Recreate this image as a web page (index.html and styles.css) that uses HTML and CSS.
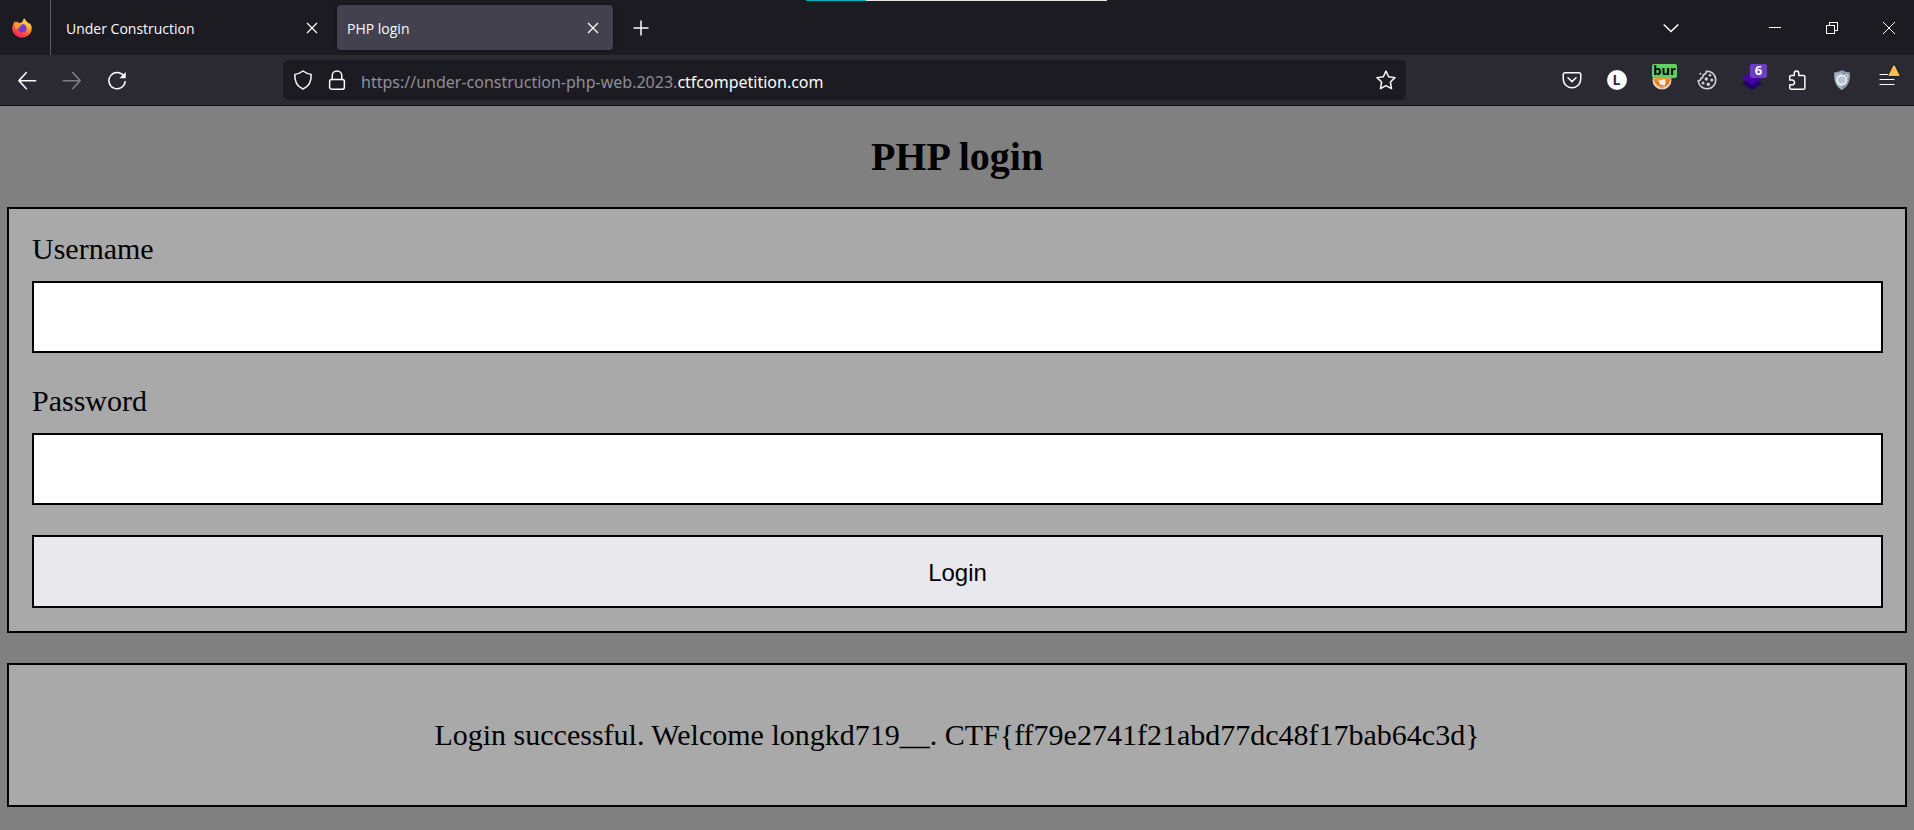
FILE: index.html
```
<!DOCTYPE html>
<html lang="en">
<head>
<meta charset="utf-8">
<title>PHP login</title>
<link rel="stylesheet" href="styles.css">
</head>
<body>
<header class="browser">
  <div class="loadbar"></div>
  <div class="tabbar">
    <div class="brand">
      <svg class="icon" viewBox="0 0 20 20" aria-label="Firefox">
        <defs>
          <linearGradient id="flame" x1="0.8" y1="0" x2="0.3" y2="1">
            <stop offset="0" stop-color="#fff44f"/><stop offset=".35" stop-color="#ffb02e"/>
            <stop offset=".65" stop-color="#ff5a36"/><stop offset="1" stop-color="#f5156c"/>
          </linearGradient>
        </defs>
        <path fill="url(#flame)" d="M1.2 6.5 2.6 3l1.2 1.600 2-1 1 1.700 3.600-1.200C10.700 2.300 11.500 1 12.600.2c.3 1.700 1.300 2.700 2.600 3.800 1 .5 1.500 1.200 1.800 2 .3-.3.4-.6.3-1.200 1.600 1.500 2.500 3.600 2.500 5.700a9.800 9.300 0 0 1-19.600 0c0-1.500.3-2.800 1-4z"/>
        <circle cx="10.300" cy="10.200" r="4.300" fill="#7139d8"/>
        <path fill="#ff9a2b" d="M2.500 5.500c2-.8 4-.6 5.300.4l2.700.2c-.1 1.200-1.500 1.500-2.200 1.800-.6.6-.3 1.200-.8 1.700-.7.5-1.500.7-1.800 1.400L3 10z"/>
        <path fill="#ffcb3a" d="M12 5.500c2.700.6 3.800 2.500 3.500 5 1.200-1.600 1.100-4-.4-5.700L12.700 2z"/>
      </svg>
    </div>
    <div class="tab">
      <span class="tab-title">Under Construction</span>
      <button class="tab-close" aria-label="Close tab"><svg viewBox="0 0 10 10"><path d="M0 0l10 10M10 0L0 10"/></svg></button>
    </div>
    <div class="tab tab-active">
      <span class="tab-title">PHP login</span>
      <button class="tab-close" aria-label="Close tab"><svg viewBox="0 0 10 10"><path d="M0 0l10 10M10 0L0 10"/></svg></button>
    </div>
    <button class="new-tab" aria-label="New tab"><svg viewBox="0 0 16 16"><path d="M8 .5v15M.5 8h15"/></svg></button>
    <div class="window-controls">
      <button class="list-tabs" aria-label="List all tabs"><svg viewBox="0 0 16 16"><path d="M.7 4.500 8 11.500l7.300-7"/></svg></button>
      <button class="win" aria-label="Minimize"><svg viewBox="0 0 14 14"><path d="M1 6.500h12" shape-rendering="crispEdges"/></svg></button>
      <button class="win" aria-label="Restore"><svg viewBox="0 0 14 14"><path d="M1.500 4.500h8v8h-8zM4.500 4.500v-3h8v8h-3" shape-rendering="crispEdges"/></svg></button>
      <button class="win" aria-label="Close window"><svg viewBox="0 0 14 14"><path d="M1 1l12 12M13 1L1 13"/></svg></button>
    </div>
  </div>
  <div class="toolbar">
    <button class="tool" aria-label="Back"><svg class="icon line" viewBox="0 0 16 16"><path d="M15 8.500H1.500M7.500 2l-6 6.500 6 6.500"/></svg></button>
    <button class="tool" aria-label="Forward" disabled><svg class="icon line" viewBox="0 0 16 16"><path d="M1 8.500h13.500M8.500 2l6 6.500-6 6.500"/></svg></button>
    <button class="tool" aria-label="Reload"><svg class="icon line" viewBox="0 0 16 16"><path d="M13.300 4.700A6.500 6.500 0 1 0 14.500 9.300"/><path class="solid" d="M15 1.500v5h-5z"/></svg></button>
    <div class="urlbar">
      <svg class="icon line" viewBox="0 0 16 16"><path d="M8 .8c2 1.500 4 2.300 6.500 2.700.4 5.200-1.700 9.500-6.500 11.700C3.200 13 1.100 8.700 1.500 3.500 4 3.100 6 2.300 8 .8z"/></svg>
      <svg class="icon line" viewBox="0 0 16 16"><path d="M4.200 7.500V4.300a3.800 3.600 0 0 1 7.600 0v3.200"/><rect x="2.100" y="7.600" width="11.800" height="7.700" rx="1.500"/></svg>
      <div class="url" role="textbox" aria-label="Address">https://under-construction-php-web.2023.<span class="domain">ctfcompetition.com</span></div>
      <button class="star" aria-label="Bookmark"><svg class="icon line" viewBox="0 0 16 16"><path d="M8 .9l2.100 4.500 5.100.7-3.700 3.500.9 5.300L8 12.500l-4.400 2.400.9-5.300L.8 6.100l5.100-.7z"/></svg></button>
    </div>
    <button class="tool" aria-label="Pocket"><svg class="icon line" viewBox="0 0 16 16"><path d="M2.500 2.200h11a1.500 1.500 0 0 1 1.500 1.500v3.500a7 7 0 0 1-14 0V3.700a1.500 1.500 0 0 1 1.500-1.500z"/><path d="M4.800 6.200 8 9.300l3.200-3.100"/></svg></button>
    <button class="tool" aria-label="Account"><span class="avatar">L</span></button>
    <button class="tool" aria-label="FoxyProxy">
      <svg class="icon" viewBox="0 0 20 20"><circle cx="10" cy="10" r="9.500" fill="#e8dccf"/><path fill="#f5953a" d="M1 9l9-4 9 4-2 5-6 4-1 1-6-4z"/><path fill="#f7efe6" d="M6 11l7-2 1 5-4 3z"/><path fill="#e07b1f" d="M2 10l4 1 3 5-3-1zM14 10l4-1-2 6-3 2z"/><path fill="#5c4a3a" d="M9 15h2.500l-1 1.500z"/></svg>
      <span class="badge badge-green">bur</span>
    </button>
    <button class="tool cookie" aria-label="Cookies"><svg class="icon" viewBox="0 0 20 20"><path d="M9.500 1.200a8.800 8.800 0 1 1-8.300 9.300c1.800.2 2.800-.7 2.600-2.200 1.800-.2 2.600-1.500 2.200-3.300C8.200 4.800 9.300 3.200 9.500 1.200z"/><g class="solid"><circle cx="13" cy="5.300" r="1.300"/><circle cx="9.300" cy="9" r="1.700"/><circle cx="14.800" cy="10" r="1.600"/><circle cx="6" cy="13" r="1.500"/><circle cx="11.300" cy="14.300" r="1.700"/><circle cx="3.300" cy="3.800" r="1"/></g></svg></button>
    <button class="tool" aria-label="Layers">
      <svg class="icon" viewBox="0 0 20 20"><path fill="#21006b" d="M0 13l10-6 10 6-10 7z"/><path fill="#4703a6" d="M0 8l10-7 10 7-10 7z"/></svg>
      <span class="badge badge-purple">6</span>
    </button>
    <button class="tool" aria-label="Extensions"><svg class="icon line" viewBox="0 0 16 16"><path d="M2.200 7V5.300a1 1 0 0 1 1-1h2.600V2.700a1.800 1.900 0 0 1 3.600 0v1.600h3.900a1 1 0 0 1 1 1v9a1 1 0 0 1-1 1H3.200a1 1 0 0 1-1-1v-2.500h1.900a1.900 1.900 0 0 0 0-3.800H2"/></svg></button>
    <button class="tool" aria-label="Privacy shield"><svg class="icon" viewBox="0 0 20 20"><path fill="#8a98aa" d="M10 0c2.500 1.500 5 2 8 2.500.3 8-1.500 14-8 17.500C3.500 16.500 1.700 10.500 2 2.500 5 2 7.500 1.500 10 0z"/><path fill="#aab5c3" d="M10 1.500V20C4 16.500 3 11 3 3.500c3-.4 5-.8 7-2z"/><circle cx="9.800" cy="10" r="4.700" fill="#b9c2ce" stroke="#eef1f5" stroke-width="1.700"/><circle cx="14.500" cy="6" r="1.600" fill="#7e8c9e" stroke="#eef1f5"/></svg></button>
    <button class="tool" aria-label="Menu">
      <svg class="icon line" viewBox="0 0 20 20"><path d="M3 4.500h14M3 9.500h14M3 14.500h14"/></svg>
      <svg class="alert" viewBox="0 0 14 14"><path d="M7 1c.6 0 1.100.3 1.400.9l4.200 8.600c.4 1-.2 2-1.200 2H2.600c-1 0-1.600-1-1.200-2l4.200-8.600C5.900 1.300 6.400 1 7 1z"/></svg>
    </button>
  </div>
</header>
<main class="page">
  <h1 class="heading">PHP login</h1>
  <form class="panel login">
    <label class="label" for="username">Username</label>
    <input class="field" id="username" type="text">
    <label class="label" for="password">Password</label>
    <input class="field" id="password" type="password">
    <button class="submit" type="button">Login</button>
  </form>
  <div class="panel response">Login successful. Welcome longkd719__. CTF{ff79e2741f21abd77dc48f17bab64c3d}</div>
</main>
</body>
</html>
```
FILE: styles.css
```
* { box-sizing: border-box; }

body {
  margin: 0;
  min-height: 100vh;
  background: #808080;
  color: #000;
  font-family: "Liberation Serif", "Times New Roman", serif;
}

svg { display: block; fill: none; }
button { margin: 0; padding: 0; border: 0; background: none; color: inherit; font: inherit; }

/* Browser frame */
.browser {
  position: relative;
  color: #fbfbfe;
  font-family: "Open Sans", "Noto Sans", sans-serif;
  border-bottom: 1px solid #0c0c0d;
}
.loadbar {
  position: absolute;
  top: 0;
  left: calc(50% - 151px);
  width: 301px;
  height: 1px;
  background: linear-gradient(to right, #00b3c0 60px, #e6e6e6 60px);
}
.tabbar { display: flex; height: 55px; background: #1c1b22; }
.brand {
  display: flex;
  align-items: center;
  justify-content: center;
  width: 51px;
  padding-right: 6px;
  border-right: 1px solid #5b5a63;
}
.icon { width: 20px; height: 20px; }
.line { stroke: #fbfbfe; stroke-width: 1.200; stroke-linecap: round; stroke-linejoin: round; }
.solid { fill: #fbfbfe; stroke: none; }

.tab {
  display: flex;
  align-items: center;
  justify-content: space-between;
  width: 276px;
  margin: 5px;
  padding: 0 10px;
  border-radius: 4px;
  font-size: 14px;
  line-height: 20px;
}
.tab-title { padding-top: 2px; }
.tab-active { margin-left: 0; background: #42414d; box-shadow: 0 0 4px rgba(0, 0, 0, 0.4); }
.tab-close { display: flex; align-items: center; justify-content: center; width: 20px; height: 20px; }
.tab-close svg { width: 10px; height: 10px; overflow: visible; stroke: #fbfbfe; stroke-width: 1.300; }
.new-tab { display: flex; align-items: center; justify-content: center; width: 45px; }
.new-tab svg { width: 16px; height: 16px; stroke: #fbfbfe; stroke-width: 1.500; }
.window-controls { display: flex; gap: 6px; margin-left: auto; }
.window-controls button { display: flex; align-items: center; justify-content: center; }
.list-tabs { width: 46px; margin-right: 49px; }
.list-tabs svg { width: 16px; height: 16px; stroke: #fbfbfe; stroke-width: 1.600; }
.win { width: 51px; }
.win svg { width: 14px; height: 14px; stroke: #fff; stroke-width: 1; }

.toolbar { display: flex; align-items: center; height: 50px; padding: 0 5px 0 4px; background: #2b2a33; }
.tool { position: relative; display: flex; align-items: center; justify-content: center; width: 45px; height: 40px; }
.tool:disabled { opacity: 0.4; }
.urlbar {
  display: flex;
  flex: 1;
  align-items: center;
  height: 40px;
  margin: 0 143px 0 144px;
  padding: 0 10px;
  gap: 14px;
  border-radius: 5px;
  background: #1c1b22;
}
.url { flex: 1; padding-top: 3px; color: #8f8f98; font-family: "Noto Sans", sans-serif; font-size: 16px; line-height: 24px; white-space: nowrap; }
.domain { color: #fbfbfe; }

.avatar {
  width: 20px;
  height: 20px;
  border-radius: 50%;
  background: #fbfbfe;
  color: #2b2a33;
  font-size: 14px;
  font-weight: 700;
  line-height: 20px;
  text-align: center;
}
.badge {
  position: absolute;
  top: 4px;
  right: 7px;
  height: 14px;
  border-radius: 2px;
  font-size: 13px;
  font-weight: 700;
  line-height: 13px;
  text-align: center;
}
.badge-green { width: 25px; background: #63ce63; color: #000; }
.badge-purple { width: 17px; background: #6a3fc0; color: #fff; }
.cookie svg { stroke: #d0d0d4; stroke-width: 1.600; stroke-linejoin: round; }
.cookie .solid { fill: #d0d0d4; }
.alert { position: absolute; top: 4px; right: 8px; width: 14px; height: 14px; fill: #ffbd4f; stroke: #1c1b22; stroke-width: 1; }

/* Login page */
.page { display: flow-root; padding: 0 7px 23px; }
.heading { margin: 28px 0 27px; font-size: 40px; line-height: 46px; text-align: center; }
.panel { border: 2px solid #000; background: #a9a9a9; }
.login { display: flex; flex-direction: column; margin-bottom: 30px; padding: 22px 22px 23px 23px; }
.label { margin-bottom: 14px; font-size: 30px; line-height: 36px; }
.field {
  height: 72px;
  margin: 0 0 30px;
  padding: 0 16px;
  border: 2px solid #000;
  border-radius: 0;
  background: #fff;
  font-size: 24px;
}
.submit {
  height: 73px;
  padding-top: 2px;
  border: 2px solid #000;
  background: #e9e9ed;
  color: #000;
  font-family: "Liberation Sans", Arial, sans-serif;
  font-size: 24px;
}
.response { padding: 53px 20px; font-size: 30px; line-height: 34px; text-align: center; }
```
